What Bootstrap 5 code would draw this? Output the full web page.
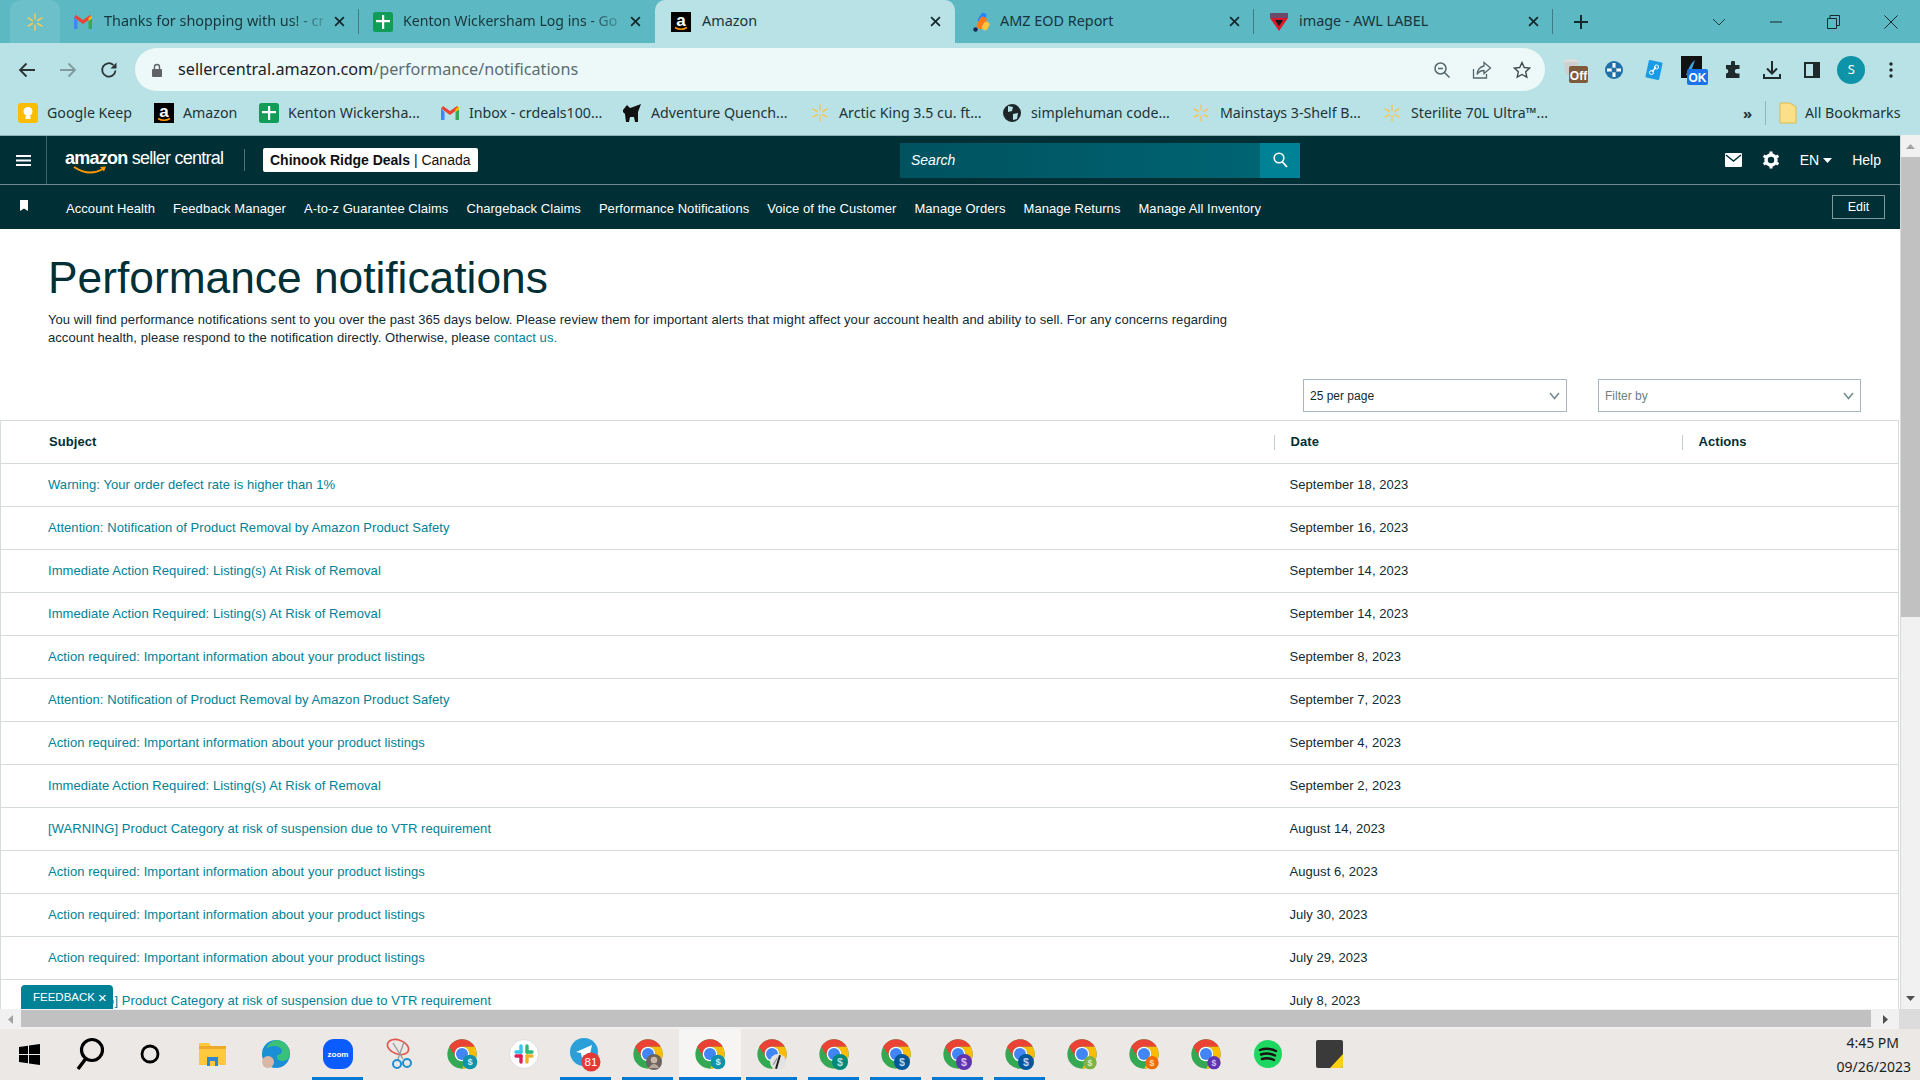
<!DOCTYPE html>
<html lang="en">
<head>
<meta charset="utf-8">
<title>Performance notifications</title>
<link href="https://cdn.jsdelivr.net/npm/bootstrap@5.3.0/dist/css/bootstrap.min.css" rel="stylesheet">
<style>
html,body{height:1080px;overflow:hidden}
body{width:1920px;display:flex;flex-direction:column;font-family:"Liberation Sans",Arial,sans-serif;background:#fff}
.ui-font{font-family:"Noto Sans","Open Sans",sans-serif}
/* tab strip */
.tabstrip{height:43px;background:#5cb8c2;flex:none;padding-left:10px;color:#16353b;font-size:14.4px}
.pin-tab{width:50px;height:43px;background:#6cc0c9;border-radius:10px 10px 0 0;display:flex;align-items:center;justify-content:center}
.ctab{height:43px;display:flex;align-items:center;position:relative;flex:none;padding:0 14px;gap:10px}
.ctab-t2{width:299px;padding-left:13px;gap:11px}
.ctab-t3{width:296px}
.ctab-on{width:300px;background:#b8e2e6;border-radius:10px 10px 0 0;padding-left:16px;gap:11px;padding-right:14px}
.ctab-t5{width:299px;padding-left:16px;gap:9px}
.ctab-t6{width:299px;padding-left:15px}
.sep::after{content:"";position:absolute;right:0;top:9px;height:25px;width:1px;background:#3f7c85}
.ctab-title{flex:1;white-space:nowrap;padding-bottom:2px;min-width:0}
.ctab-fade{-webkit-mask-image:linear-gradient(90deg,#000 85%,rgba(0,0,0,.25));mask-image:linear-gradient(90deg,#000 85%,rgba(0,0,0,.25))}
.ctab-cut{font-size:14.1px}
.new-tab{margin-left:20px}
.win-ctl{width:57.5px;display:flex;justify-content:center}
/* toolbar */
.toolbar{height:53px;background:#b8e2e6;flex:none;padding-left:6px}
.tcell{width:41px;display:flex;justify-content:center;align-items:center}
.omni{width:1410px;height:43px;margin-left:6px;margin-right:10px;background:#edf8f8;border-radius:22px;padding:0 3px 0 16px;font-size:16.2px;color:#202124}
.omni-lock{margin-right:15px}
.omni-path{color:#5b6d72}
.ocell{width:40px;display:flex;justify-content:center}
.xcell{width:39.5px;display:flex;justify-content:center;align-items:center}
.avatar-s{width:28px;height:28px;border-radius:50%;background:#0e93a8;color:#fff;font-size:13px;display:flex;align-items:center;justify-content:center}
/* bookmarks */
.bookbar{height:39px;background:#b8e2e6;flex:none;padding:0 0 5px 18px;font-size:14.2px;color:#1d3438}
.bm{display:flex;align-items:center;gap:9px;white-space:nowrap;flex:none}
.bm:nth-child(1){width:136px}.bm:nth-child(2){width:105px}.bm:nth-child(3){width:181px}.bm:nth-child(4){width:182px}.bm:nth-child(5){width:188px}.bm:nth-child(6){width:192px}.bm:nth-child(7){width:189px}.bm:nth-child(8){width:191px}.bm:nth-child(9){width:361px}
.bm-more{font-size:15px;width:22px;font-weight:700}
.bm-div{width:1px;height:24px;background:#8fb8bd;margin-right:13px}
/* viewport */
.viewport{flex:none;height:874px;overflow:hidden}
.page{width:1900px;position:relative;overflow:hidden;border-top:1px solid #8fb1b4}
.head-a{height:48px;background:#002f36;color:#fff;border-bottom:0}
.burger{width:47px;height:100%;border-right:1px solid #3d6369;display:flex;align-items:center;justify-content:center}
.head-l{width:900px}
.logo-wrap{width:179px;margin-left:18px;position:relative;height:100%;border:0}
.logo-txt{font-size:18px;letter-spacing:-.75px;line-height:1;white-space:nowrap;margin-top:-5px}
.logo-txt b{font-weight:700}
.logo-smile{position:absolute;left:8px;top:30px}
.hsep{width:1px;height:22px;background:#4f7076;margin-right:18px}
.seller-badge{background:#fff;color:#0f1111;font-size:14px;height:24px;line-height:24px;padding:0 7px;border-radius:2px;white-space:nowrap}
.seller-badge b{font-weight:700}
.search-box{width:400px;height:35px;background:linear-gradient(90deg,#00525f,#006674);color:#fff;font-style:italic;font-size:14px;padding-left:11px}
.search-btn{width:40px;height:35px;background:#008296;font-style:normal;display:flex;align-items:center;justify-content:center}
.head-r{flex:1;justify-content:flex-end;padding-right:19px;font-size:14px}
.gear{margin:0 20px 0 4px}
.head-line{height:1px;background:#6d8a8e}
.head-b{height:44px;background:#002f36;color:#fff;font-size:13px}
.mark-cell{width:47px;display:flex;justify-content:center;margin-top:-4px}
.sublinks{margin-left:19px;margin-top:3px;gap:18px;white-space:nowrap;letter-spacing:.06px}
.edit-btn{margin-left:auto;margin-right:15px;margin-top:-1px;height:24px;width:53px;border:1px solid #7f9a9d;border-radius:0;background:transparent;color:#fff;font-size:12.5px;padding:0;line-height:20px}
.page-title{margin:24px 0 8px 48px;font-size:44.3px;line-height:50px;font-weight:400;color:#002f36;font-family:"Liberation Sans",Arial,sans-serif}
.intro{margin:0 0 32px 48px;font-size:13px;line-height:18px;letter-spacing:.055px;color:#0f2b33;white-space:nowrap}
.intro a,.notif a{color:#008296;text-decoration:none}
.filters{gap:31px;padding-right:39px;margin-bottom:8px}
.filter-sel{width:264px;height:33px;border:1px solid #a6b8bb;border-radius:0;font-size:12px;color:#0f2b33;padding:0 24px 0 6px;font-family:"Liberation Sans",Arial,sans-serif;background-size:11px 8px;background-position:right 6px center;background-image:url("data:image/svg+xml,%3csvg xmlns='http://www.w3.org/2000/svg' viewBox='0 0 11 8'%3e%3cpath fill='none' stroke='%23758a8d' stroke-width='1.5' d='M1 1l4.500 5.500L10 1'/%3e%3c/svg%3e")}
.filter-narrow{width:263px}
.filter-muted{color:#6d7f83}
.notif{width:1899px;margin:0;table-layout:fixed;font-size:13px;letter-spacing:.06px;border:1px solid #d5dbdb;border-bottom:0;color:#0f2b33;border-collapse:collapse}
.notif th,.notif td{height:43px;padding:0;border-bottom:1px solid #d5dbdb;vertical-align:middle;background:#fff;box-shadow:none;font-weight:400;color:#0f2b33}
.notif th{font-weight:700;color:#002f36}
.notif th:first-child{padding-left:48px}
.notif td:first-child{padding-left:47px}
.notif th.hd{padding-left:17px;background:#fff linear-gradient(#c3cdce,#c3cdce) left center/1px 15px no-repeat}
.notif td.dt{padding-left:16px}
.fb-tab{position:absolute;left:21px;bottom:0;width:92px;height:24px;background:#008296;color:#fff;border-radius:4px 4px 0 0;font-size:11.5px;display:flex;align-items:center;padding:2px 0 0 12px;gap:3px}
.fb-x{font-size:15px;line-height:1;margin-top:-2px}
/* scrollbars */
.vbar{width:20px;background:#f1f1f1;border-left:1px solid #d9d9d9}
.vbar-arrow{height:22px;display:flex;align-items:center;justify-content:center;flex:none}
.vbar-thumb{height:460px;background:#c1c1c1;flex:none}
.hbar{height:20px;flex:none;background:#f1f1f1;padding-top:1px}
.hbar-end{width:21px;height:19px;display:flex;align-items:center;justify-content:center;flex:none}
.hbar-thumb{width:1850px;height:17px;background:#c1c1c1;flex:none}
.hbar-r{width:28px}
.hbar-corner{width:21px;height:20px;margin-top:-1px;background:#dcdcdc;flex:none}
/* taskbar */
.taskbar{height:51px;flex:none;background:#ebe8e5}
.tb{height:51px;display:flex;align-items:center;justify-content:center;flex:none;width:62px;padding-bottom:1px}
.tb-a{width:59px}.tb-b{width:62px}.tb-c{width:58px}.tb-d{width:66px}.tb-e{width:61.5px}
.tb-run{background:linear-gradient(#0078d4,#0078d4) center bottom/51px 3px no-repeat}
.tb-active{background:#f6f5f3 linear-gradient(#0078d4,#0078d4) center bottom/100% 3px no-repeat}
.clock{margin-left:auto;margin-right:9px;padding-top:2px;font-size:14px;line-height:24px;text-align:right;color:#1f1f1f}
.clock-t{padding-right:12px}
</style>
</head>
<body>
<svg class="d-none" xmlns="http://www.w3.org/2000/svg">
  <symbol id="chr" viewBox="0 0 48 48"><circle cx="24" cy="24" r="22" fill="#34a853"/><path fill="#ea4335" d="M43.050 13A22 22 0 0 0 4.950 13L14.470 29.500A11 11 0 0 1 24 13Z"/><path fill="#fbbc04" d="M43.050 13A22 22 0 0 1 24 46L33.530 29.500A11 11 0 0 0 24 13Z"/><circle cx="24" cy="24" r="11" fill="#fff"/><circle cx="24" cy="24" r="9" fill="#4285f4"/></symbol>
  <symbol id="spark" viewBox="0 0 20 20"><g stroke="#f0c860" stroke-width="1.500" stroke-linecap="round"><path d="M10 2v5M10 13v5M3.100 6l4.300 2.500M12.600 11.500l4.300 2.500M3.100 14l4.300-2.500M12.600 8.500 16.900 6"/></g></symbol>
  <symbol id="gm" viewBox="0 0 20 20"><path fill="#4285f4" d="M1 5.500V17h3.500V9z"/><path fill="#34a853" d="M15.500 9V17H19V5.500z"/><path fill="#ea4335" d="M1 5.500 10 12l9-6.500L17 3 10 8 3 3z"/><path fill="#fbbc04" d="M15.500 6 19 3.500V6.500L15.500 9z"/></symbol>
  <symbol id="sht" viewBox="0 0 20 20"><rect width="20" height="20" rx="2.500" fill="#0f9d58"/><path fill="#fff" d="M9 3h2.200v5H17v2.200h-5.800V17H9v-6.800H3V8h6z"/></symbol>
  <symbol id="amz" viewBox="0 0 20 20"><rect width="20" height="20" fill="#000"/><text x="10" y="13.500" text-anchor="middle" font-family="Liberation Sans" font-weight="700" font-size="17" fill="#fff">a</text><path d="M4 15.500q6 3.500 12 0" fill="none" stroke="#f90" stroke-width="1.500"/></symbol>
  <symbol id="xx" viewBox="0 0 10 10"><path d="M1 1l8 8M9 1l-8 8" stroke="#16292d" stroke-width="1.600" fill="none"/></symbol>
</svg>

<!-- tab strip -->
<div class="tabstrip d-flex align-items-center ui-font">
  <div class="pin-tab"><svg width="20" height="20"><use href="#spark"/></svg></div>
  <div class="ctab ctab-t2 sep"><svg width="20" height="20" class="flex-none"><use href="#gm"/></svg><span class="ctab-title ctab-fade">Thanks for shopping with us! - cr</span><svg width="11" height="11"><use href="#xx"/></svg></div>
  <div class="ctab ctab-t3"><svg width="20" height="20"><use href="#sht"/></svg><span class="ctab-title ctab-fade ctab-cut">Kenton Wickersham Log ins - Go</span><svg width="11" height="11"><use href="#xx"/></svg></div>
  <div class="ctab ctab-on"><svg width="20" height="20"><use href="#amz"/></svg><span class="ctab-title">Amazon</span><svg width="11" height="11"><use href="#xx"/></svg></div>
  <div class="ctab ctab-t5 sep"><svg width="20" height="20" viewBox="0 0 20 20"><rect x="8" y="0" width="6" height="11" rx="3" transform="rotate(30 10 6)" fill="#2684ff"/><rect x="7" y="4" width="7" height="13" rx="3.500" transform="rotate(30 10 11)" fill="#ff7a1a"/><rect x="12" y="9" width="6" height="9" rx="3" transform="rotate(30 14 13)" fill="#ffc43d"/><circle cx="4.500" cy="17.500" r="2.200" fill="#172b4d"/></svg><span class="ctab-title">AMZ EOD Report</span><svg width="11" height="11"><use href="#xx"/></svg></div>
  <div class="ctab ctab-t6 sep"><svg width="20" height="20" viewBox="0 0 20 20"><rect x="1" y="1" width="18" height="5" fill="#6d4a6a"/><path d="M1 6h18l-9 13z" fill="#d9162b"/><path d="M6 8h8l-4 6z" fill="#141414"/></svg><span class="ctab-title">image - AWL LABEL</span><svg width="11" height="11"><use href="#xx"/></svg></div>
  <svg class="new-tab" width="16" height="16" viewBox="0 0 16 16"><path d="M8 1v14M1 8h14" stroke="#16292d" stroke-width="2"/></svg>
  <div class="d-flex ms-auto align-items-center">
    <div class="win-ctl"><svg width="14" height="8" viewBox="0 0 14 8"><path d="M1 1l6 6 6-6" stroke="#1d3d42" fill="none"/></svg></div>
    <div class="win-ctl"><svg width="12" height="2"><path d="M0 1h12" stroke="#16292d"/></svg></div>
    <div class="win-ctl"><svg width="13" height="14" viewBox="0 0 13 14"><path d="M.5 3.500h9v10h-9zM3 3.500v-3h9.500v10h-3" stroke="#16292d" fill="none"/></svg></div>
    <div class="win-ctl"><svg width="14" height="14" viewBox="0 0 14 14"><path d="M.5.500l13 13M13.500.500l-13 13" stroke="#16292d" fill="none"/></svg></div>
  </div>
</div>

<!-- toolbar -->
<div class="toolbar d-flex align-items-center ui-font">
  <div class="tcell"><svg width="18" height="16" viewBox="0 0 18 16"><path d="M17 8H2M8.500 1.500 2 8l6.500 6.500" stroke="#2b3336" stroke-width="1.800" fill="none"/></svg></div>
  <div class="tcell"><svg width="18" height="16" viewBox="0 0 18 16"><path d="M1 8h15M9.500 1.500 16 8l-6.500 6.500" stroke="#7f9a9e" stroke-width="1.800" fill="none"/></svg></div>
  <div class="tcell"><svg width="18" height="18" viewBox="0 0 18 18"><path d="M15.500 9.500A6.700 6.700 0 1 1 13.400 4" stroke="#2b3336" stroke-width="1.800" fill="none"/><path d="M16.500 1.500v6h-6z" fill="#2b3336"/></svg></div>
  <div class="omni d-flex align-items-center">
    <svg width="12" height="14" viewBox="0 0 12 14" class="omni-lock"><path d="M3.500 6V4a2.500 2.500 0 0 1 5 0v2" stroke="#5f6368" stroke-width="1.400" fill="none"/><rect x="1" y="6" width="10" height="8" rx="1" fill="#5f6368"/></svg>
    <span>sellercentral.amazon.com<span class="omni-path">/performance/notifications</span></span>
    <div class="d-flex ms-auto">
      <div class="ocell"><svg width="18" height="18" viewBox="0 0 18 18"><circle cx="7.500" cy="7.500" r="5.500" stroke="#55666a" stroke-width="1.500" fill="none"/><path d="M5 7.500h5M11.500 11.500l5 5" stroke="#55666a" stroke-width="1.500"/></svg></div>
      <div class="ocell"><svg width="20" height="18" viewBox="0 0 20 18"><path d="M1.500 8v9h13v-4" stroke="#55666a" stroke-width="1.300" fill="none"/><path d="M12 1.500 18.500 7 12 12.500V9.500C8.500 9.500 6.500 11 5 13.500 5.500 9 8 5.800 12 5z" stroke="#55666a" stroke-width="1.300" fill="none"/></svg></div>
      <div class="ocell"><svg width="18" height="18" viewBox="0 0 18 18"><path d="M9 1.500l2.300 5 5.400.6-4 3.700 1.100 5.400L9 13.500l-4.800 2.700 1.100-5.400-4-3.700 5.400-.6z" stroke="#3d4b4e" stroke-width="1.400" fill="none"/></svg></div>
    </div>
  </div>
  <div class="xcell"><svg width="28" height="30" viewBox="0 0 28 30"><ellipse cx="10" cy="7" rx="8" ry="3" fill="#ddd"/><path d="M3 7l2 13h10l2-13z" fill="#cfcfcf"/><rect x="8" y="11" width="19" height="17" rx="2" fill="#7d5b3c"/><text x="17.500" y="25" text-anchor="middle" font-family="Liberation Sans" font-weight="700" font-size="12" fill="#fff">Off</text></svg></div>
  <div class="xcell"><svg width="18" height="20" viewBox="0 0 18 20"><circle cx="9" cy="10" r="9" fill="#1f6fa8"/><path d="M9 3v14M2 10h14" stroke="#fff" stroke-width="3"/><circle cx="9" cy="10" r="2.500" fill="#1f6fa8"/></svg></div>
  <div class="xcell"><svg width="20" height="22" viewBox="0 0 20 22"><rect x="3" y="2" width="14" height="18" rx="1" transform="rotate(12 10 11)" fill="#1a9be6"/><path d="M8 13l4-5" stroke="#fff" stroke-width="1.500"/><circle cx="7.500" cy="13.500" r="2" stroke="#fff" fill="none"/><circle cx="12.500" cy="8" r="2" stroke="#fff" fill="none"/></svg></div>
  <div class="xcell"><svg width="30" height="30" viewBox="0 0 30 30"><rect x="3" y="1" width="21" height="22" fill="#111"/><path d="M8 20c3-8 5-12 9-15-2 6-3 9-5 15z" fill="#3aa3e3"/><rect x="9" y="14" width="21" height="16" rx="2" fill="#1a73e8"/><text x="19.500" y="26.500" text-anchor="middle" font-family="Liberation Sans" font-weight="700" font-size="12" fill="#fff">OK</text></svg></div>
  <div class="xcell"><svg width="18" height="18" viewBox="0 0 18 18"><path d="M7 1.500a2 2 0 0 1 4 0V4h4.500v4H13a2.200 2.200 0 0 0 0 4.400h2.500V17H2v-4.500a2.300 2.300 0 0 0 0-4.600V4h5z" fill="#1f2a2d"/></svg></div>
  <div class="xcell"><svg width="20" height="20" viewBox="0 0 20 20"><path d="M10 1v12M5 8.500l5 5 5-5M2 14v4h16v-4" stroke="#1f2a2d" stroke-width="2" fill="none"/></svg></div>
  <div class="xcell"><svg width="18" height="18" viewBox="0 0 18 18"><rect x="2" y="2" width="14" height="14" stroke="#1f2a2d" stroke-width="2" fill="none"/><rect x="10" y="2" width="6" height="14" fill="#1f2a2d"/></svg></div>
  <div class="xcell"><div class="avatar-s">S</div></div>
  <div class="xcell"><svg width="4" height="16" viewBox="0 0 4 16"><circle cx="2" cy="2" r="1.700" fill="#1f2a2d"/><circle cx="2" cy="8" r="1.700" fill="#1f2a2d"/><circle cx="2" cy="14" r="1.700" fill="#1f2a2d"/></svg></div>
</div>

<!-- bookmarks -->
<div class="bookbar d-flex align-items-center ui-font">
  <div class="bm"><svg width="20" height="20" viewBox="0 0 20 20"><rect width="20" height="20" rx="3" fill="#fbbc04"/><circle cx="10" cy="8.500" r="4.500" fill="#fff"/><rect x="7.500" y="13" width="5" height="3" fill="#fff"/></svg>Google Keep</div>
  <div class="bm"><svg width="20" height="20"><use href="#amz"/></svg>Amazon</div>
  <div class="bm"><svg width="20" height="20"><use href="#sht"/></svg>Kenton Wickersha...</div>
  <div class="bm"><svg width="20" height="20"><use href="#gm"/></svg>Inbox - crdeals100...</div>
  <div class="bm"><svg width="20" height="20" viewBox="0 0 20 20"><path d="M1 7l4-5 3 3 3-1 8-3-3 8v10h-3l-1-5H8l-1 5H4l-1-8-2-2z" fill="#111"/></svg>Adventure Quench...</div>
  <div class="bm"><svg width="20" height="20"><use href="#spark"/></svg>Arctic King 3.5 cu. ft...</div>
  <div class="bm"><svg width="20" height="20" viewBox="0 0 20 20"><circle cx="10" cy="10" r="9" fill="#1d2628"/><path d="M6 3l5 1-1 4-4 1zM11 11l5-1-1 6-4 1z" fill="#b8e2e6"/></svg>simplehuman code...</div>
  <div class="bm"><svg width="20" height="20"><use href="#spark"/></svg>Mainstays 3-Shelf B...</div>
  <div class="bm"><svg width="20" height="20"><use href="#spark"/></svg>Sterilite 70L Ultra™...</div>
  <span class="bm-more">»</span>
  <div class="bm-div"></div>
  <div class="d-flex align-items-center gap-2"><svg width="18" height="22" viewBox="0 0 18 22"><path d="M1 1h10l6 4v16H1z" fill="#fbe08a" stroke="#dcb94e"/></svg><span>All Bookmarks</span></div>
</div>

<!-- browser viewport -->
<div class="viewport d-flex">
  <div class="page">
    <div class="head-a d-flex align-items-center">
      <div class="head-l d-flex align-items-center h-100">
        <div class="burger"><svg width="15" height="11" viewBox="0 0 15 11"><path d="M0 1h15M0 5.500h15M0 10h15" stroke="#fff" stroke-width="2"/></svg></div>
        <div class="logo-wrap d-flex align-items-center">
          <span class="logo-txt"><b>amazon</b> seller central</span>
          <svg class="logo-smile" width="34" height="10" viewBox="0 0 34 10"><path d="M1 1q15 10 29 2" stroke="#f90" stroke-width="2" fill="none"/><path d="M27 1l6-.5-2 5z" fill="#f90"/></svg>
        </div>
        <div class="hsep"></div>
        <div class="seller-badge"><b>Chinook Ridge Deals</b> | Canada</div>
      </div>
      <div class="search-box d-flex align-items-center justify-content-between">Search
        <div class="search-btn"><svg width="15" height="16" viewBox="0 0 15 16"><circle cx="6" cy="6" r="4.800" stroke="#fff" stroke-width="1.600" fill="none"/><path d="M9.500 10l4.500 5" stroke="#fff" stroke-width="1.800"/></svg></div>
      </div>
      <div class="head-r d-flex align-items-center">
        <svg width="17" height="14" viewBox="0 0 17 14" class="me-3"><rect width="17" height="14" rx="1" fill="#fff"/><path d="M1 2l7.500 6L16 2" stroke="#002f36" stroke-width="1.500" fill="none"/></svg>
        <svg width="18" height="18" viewBox="0 0 18 18" class="gear"><circle cx="9" cy="9" r="5" fill="none" stroke="#fff" stroke-width="3.500"/><path d="M9 .5v3M9 14.500v3M1.600 4.700l2.600 1.500M13.800 11.800l2.600 1.500M1.600 13.300l2.600-1.500M13.800 6.200l2.600-1.500" stroke="#fff" stroke-width="3"/></svg>
        <span>EN</span>
        <svg width="9" height="5" viewBox="0 0 9 5" class="ms-1 me-3"><path d="M0 0h9L4.500 5z" fill="#fff"/></svg>
        <span class="ms-1">Help</span>
      </div>
    </div>
    <div class="head-line"></div>
    <div class="head-b d-flex align-items-center">
      <div class="mark-cell"><svg width="8" height="11" viewBox="0 0 8 11"><path d="M0 0h8v11L4 8.500 0 11z" fill="#fff"/></svg></div>
      <div class="sublinks d-flex">
        <span>Account Health</span><span>Feedback Manager</span><span>A-to-z Guarantee Claims</span><span>Chargeback Claims</span><span>Performance Notifications</span><span>Voice of the Customer</span><span>Manage Orders</span><span>Manage Returns</span><span>Manage All Inventory</span>
      </div>
      <button type="button" class="btn edit-btn">Edit</button>
    </div>

    <h1 class="page-title">Performance notifications</h1>
    <p class="intro">You will find performance notifications sent to you over the past 365 days below. Please review them for important alerts that might affect your account health and ability to sell. For any concerns regarding<br>account health, please respond to the notification directly. Otherwise, please <a href="#">contact us.</a></p>

    <div class="filters d-flex justify-content-end">
      <select class="form-select filter-sel"><option>25 per page</option></select>
      <select class="form-select filter-sel filter-narrow filter-muted"><option>Filter by</option></select>
    </div>

    <table class="table notif">
      <colgroup><col style="width:1273px"><col style="width:408px"><col></colgroup>
      <thead><tr><th>Subject</th><th class="hd">Date</th><th class="hd">Actions</th></tr></thead>
      <tbody>
        <tr><td><a href="#">Warning: Your order defect rate is higher than 1%</a></td><td class="dt">September 18, 2023</td><td></td></tr>
        <tr><td><a href="#">Attention: Notification of Product Removal by Amazon Product Safety</a></td><td class="dt">September 16, 2023</td><td></td></tr>
        <tr><td><a href="#">Immediate Action Required: Listing(s) At Risk of Removal</a></td><td class="dt">September 14, 2023</td><td></td></tr>
        <tr><td><a href="#">Immediate Action Required: Listing(s) At Risk of Removal</a></td><td class="dt">September 14, 2023</td><td></td></tr>
        <tr><td><a href="#">Action required: Important information about your product listings</a></td><td class="dt">September 8, 2023</td><td></td></tr>
        <tr><td><a href="#">Attention: Notification of Product Removal by Amazon Product Safety</a></td><td class="dt">September 7, 2023</td><td></td></tr>
        <tr><td><a href="#">Action required: Important information about your product listings</a></td><td class="dt">September 4, 2023</td><td></td></tr>
        <tr><td><a href="#">Immediate Action Required: Listing(s) At Risk of Removal</a></td><td class="dt">September 2, 2023</td><td></td></tr>
        <tr><td><a href="#">[WARNING] Product Category at risk of suspension due to VTR requirement</a></td><td class="dt">August 14, 2023</td><td></td></tr>
        <tr><td><a href="#">Action required: Important information about your product listings</a></td><td class="dt">August 6, 2023</td><td></td></tr>
        <tr><td><a href="#">Action required: Important information about your product listings</a></td><td class="dt">July 30, 2023</td><td></td></tr>
        <tr><td><a href="#">Action required: Important information about your product listings</a></td><td class="dt">July 29, 2023</td><td></td></tr>
        <tr><td><a href="#">[WARNING] Product Category at risk of suspension due to VTR requirement</a></td><td class="dt">July 8, 2023</td><td></td></tr>
      </tbody>
    </table>
    <div class="fb-tab"><span>FEEDBACK</span><span class="fb-x">×</span></div>
  </div>
  <div class="vbar d-flex flex-column">
    <div class="vbar-arrow"><svg width="9" height="5"><path d="M0 5h9L4.500 0z" fill="#a3a3a3"/></svg></div>
    <div class="vbar-thumb"></div>
    <div class="vbar-arrow mt-auto"><svg width="9" height="5"><path d="M0 0h9L4.500 5z" fill="#505050"/></svg></div>
  </div>
</div>
<div class="hbar d-flex">
  <div class="hbar-end"><svg width="5" height="9"><path d="M5 0v9L0 4.500z" fill="#a3a3a3"/></svg></div>
  <div class="hbar-thumb"></div>
  <div class="hbar-end hbar-r"><svg width="5" height="9"><path d="M0 0v9l5-4.500z" fill="#505050"/></svg></div>
  <div class="hbar-corner"></div>
</div>

<!-- taskbar -->
<div class="taskbar d-flex ui-font">
  <div class="tb tb-a"><svg width="21" height="21" viewBox="0 0 21 21"><path fill="#000" d="M0 3l9-1.300V10H0zM10 1.500 21 0v10H10zM0 11h9v8.300L0 18zM10 11h11v10l-11-1.500z"/></svg></div>
  <div class="tb tb-b"><svg width="28" height="34" viewBox="0 0 28 34"><circle cx="16" cy="13" r="10.500" stroke="#000" stroke-width="3.200" fill="none"/><path d="M9.500 22 2 32" stroke="#000" stroke-width="3.500"/></svg></div>
  <div class="tb tb-c"><svg width="20" height="20" viewBox="0 0 20 20"><circle cx="10" cy="10" r="8" stroke="#000" stroke-width="2.800" fill="none"/></svg></div>
  <div class="tb tb-d"><svg width="27" height="24" viewBox="0 0 27 24"><path d="M0 1h10l2 3h15v19H0z" fill="#ffc83d"/><path d="M0 4h27v3H0z" fill="#eda92a"/><rect x="8" y="15" width="11" height="9" fill="#2b88d8"/><rect x="11" y="19" width="5" height="5" fill="#ffc83d"/></svg></div>
  <div class="tb tb-e"><svg width="30" height="30" viewBox="0 0 30 30"><circle cx="15" cy="15" r="14" fill="#1b8fd6"/><path d="M15 1a14 14 0 0 1 14 14c0 5-4 7-8 7-3 0-5-2-5-4 0-3 5-2 5-6 0-3-4-5-8-5-3 0-6 1-8 3A14 14 0 0 1 15 1z" fill="#39c17a"/><circle cx="7" cy="23" r="6" fill="#d8b7a4"/></svg></div>
  <div class="tb tb-run"><svg width="30" height="30" viewBox="0 0 30 30"><rect width="30" height="30" rx="11" fill="#0b5cff"/><text x="15" y="18" text-anchor="middle" font-family="Liberation Sans" font-weight="700" font-size="8" fill="#fff">zoom</text></svg></div>
  <div class="tb"><svg width="30" height="34" viewBox="0 0 30 34"><ellipse cx="13" cy="10" rx="11" ry="7" transform="rotate(20 13 10)" stroke="#e2574c" stroke-width="1.600" fill="none"/><path d="M8 6l10 16M19 5 13 22" stroke="#9a9a9a" stroke-width="1.400"/><circle cx="12" cy="27" r="4" stroke="#1f8fd0" stroke-width="2" fill="none"/><circle cx="22" cy="26" r="4" stroke="#1f8fd0" stroke-width="2" fill="none"/></svg></div>
  <div class="tb"><svg width="32" height="34" viewBox="0 0 48 48"><use href="#chr"/><circle cx="36" cy="36" r="11" fill="#0e93a8"/><text x="36" y="41" text-anchor="middle" font-family="Liberation Sans" font-weight="700" font-size="14" fill="#cfeff3">$</text></svg></div>
  <div class="tb"><svg width="30" height="30" viewBox="0 0 30 30"><circle cx="15" cy="15" r="14.500" fill="#fff" stroke="#ddd"/><g stroke-width="3.400" stroke-linecap="round" fill="none"><path d="M12 7v6" stroke="#36c5f0"/><path d="M18 13H23" stroke="#2eb67d"/><path d="M18 7v6" stroke="#2eb67d"/><path d="M18 17v6" stroke="#ecb22e"/><path d="M12 17v6" stroke="#e01e5a"/><path d="M7 17h5" stroke="#e01e5a"/><path d="M7 13h5" stroke="#36c5f0"/><path d="M18 17h5" stroke="#ecb22e"/></g></svg></div>
  <div class="tb tb-run"><svg width="32" height="36" viewBox="0 0 32 36"><circle cx="14" cy="16" r="14" fill="#2a9fd8"/><path d="M6 16 22 9l-3 14-5-4-2 3-1-5z" fill="#fff"/><circle cx="21" cy="26" r="9.500" fill="#e53935"/><text x="21" y="30" text-anchor="middle" font-family="Liberation Sans" font-size="11.500" fill="#fff">81</text></svg></div>
  <div class="tb tb-run"><svg width="32" height="34" viewBox="0 0 48 48"><use href="#chr"/><circle cx="33" cy="36" r="12" fill="#6c6460"/><circle cx="33" cy="33" r="5" fill="#c9b6a6"/><path d="M25 45q8-12 16 0z" fill="#b6a99b"/></svg></div>
  <div class="tb tb-active"><svg width="32" height="34" viewBox="0 0 48 48"><use href="#chr"/><circle cx="36" cy="36" r="11" fill="#0e93a8"/><text x="36" y="41" text-anchor="middle" font-family="Liberation Sans" font-weight="700" font-size="14" fill="#cfeff3">$</text></svg></div>
  <div class="tb tb-run"><svg width="32" height="34" viewBox="0 0 48 48"><use href="#chr"/><circle cx="33" cy="36" r="12" fill="#e3e3e3"/><path d="M30 46l6-20" stroke="#222" stroke-width="3"/><path d="M26 40l6-10" stroke="#999" stroke-width="2"/></svg></div>
  <div class="tb tb-run"><svg width="32" height="34" viewBox="0 0 48 48"><use href="#chr"/><circle cx="33" cy="36" r="12" fill="#00897b"/><text x="33" y="42" text-anchor="middle" font-family="Liberation Sans" font-weight="700" font-size="16" fill="#b2dfdb">$</text></svg></div>
  <div class="tb tb-run"><svg width="32" height="34" viewBox="0 0 48 48"><use href="#chr"/><circle cx="33" cy="36" r="12" fill="#01579b"/><text x="33" y="42" text-anchor="middle" font-family="Liberation Sans" font-weight="700" font-size="16" fill="#b3d4f0">$</text></svg></div>
  <div class="tb tb-run"><svg width="32" height="34" viewBox="0 0 48 48"><use href="#chr"/><circle cx="33" cy="36" r="12" fill="#5e35b1"/><text x="33" y="42" text-anchor="middle" font-family="Liberation Sans" font-weight="700" font-size="16" fill="#d1c4e9">$</text></svg></div>
  <div class="tb tb-run"><svg width="32" height="34" viewBox="0 0 48 48"><use href="#chr"/><circle cx="33" cy="36" r="12" fill="#01579b"/><text x="33" y="42" text-anchor="middle" font-family="Liberation Sans" font-weight="700" font-size="16" fill="#b3d4f0">$</text></svg></div>
  <div class="tb"><svg width="32" height="34" viewBox="0 0 48 48"><use href="#chr"/><circle cx="36" cy="37" r="10" fill="#7cb342"/><text x="36" y="42" text-anchor="middle" font-family="Liberation Sans" font-weight="700" font-size="13" fill="#dcedc8">$</text></svg></div>
  <div class="tb"><svg width="32" height="34" viewBox="0 0 48 48"><use href="#chr"/><circle cx="36" cy="37" r="10" fill="#ef6c00"/><text x="36" y="42" text-anchor="middle" font-family="Liberation Sans" font-weight="700" font-size="13" fill="#ffe0b2">$</text></svg></div>
  <div class="tb"><svg width="32" height="34" viewBox="0 0 48 48"><use href="#chr"/><circle cx="36" cy="37" r="10" fill="#5e35b1"/><text x="36" y="42" text-anchor="middle" font-family="Liberation Sans" font-weight="700" font-size="13" fill="#d1c4e9">$</text></svg></div>
  <div class="tb"><svg width="28" height="28" viewBox="0 0 28 28"><circle cx="14" cy="14" r="14" fill="#1ed760"/><path d="M6 10q8-3 16 1M7 14.500q7-2.500 14 1M8 19q6-2 12 1" stroke="#191414" stroke-width="2.400" stroke-linecap="round" fill="none"/></svg></div>
  <div class="tb"><svg width="27" height="28" viewBox="0 0 27 28"><rect width="27" height="28" rx="2" fill="#3a3a3a"/><path d="M27 14v12a2 2 0 0 1-2 2H14z" fill="#fcd116"/></svg></div>
  <div class="clock"><div class="clock-t">4:45 PM</div><div>09/26/2023</div></div>
</div>
</body>
</html>
